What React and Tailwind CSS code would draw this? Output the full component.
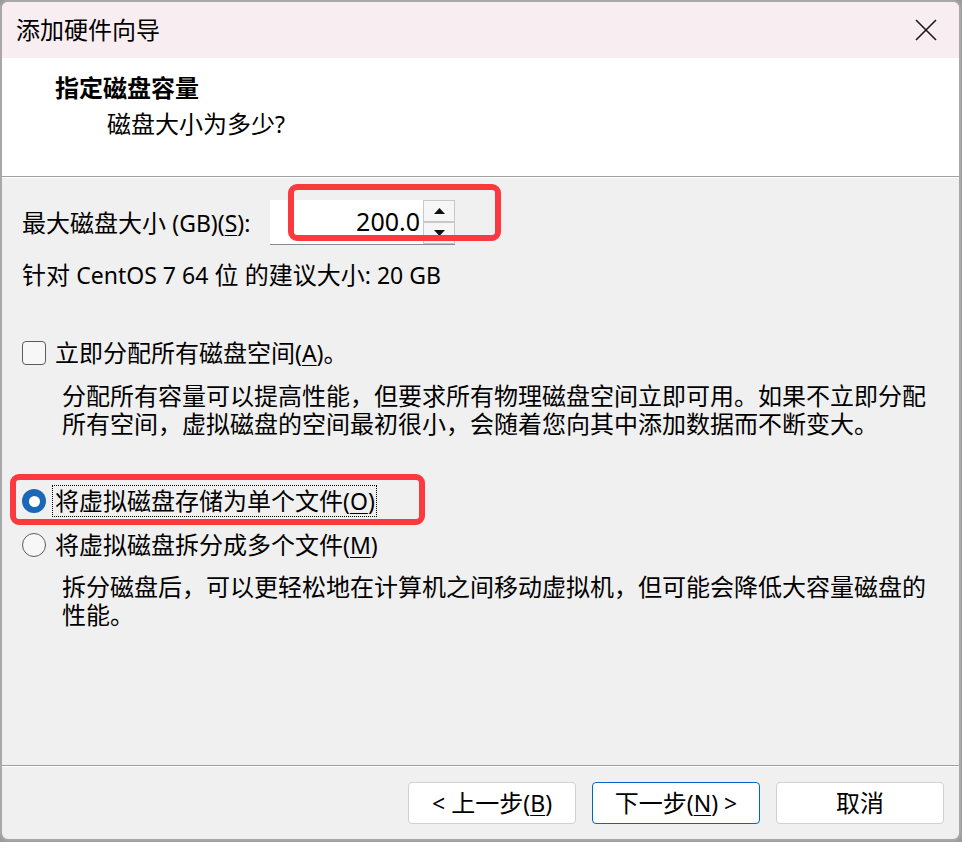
import React from 'react'

const L = ({ children }) => <span className="text-[23px]">{children}</span>
const U = ({ children }) => <span className="underline underline-offset-[3px] decoration-1">{children}</span>

function Radio({ checked }) {
  if (checked) {
    return (
      <span className="w-[24px] h-[24px] rounded-full bg-[#1a67b8] flex items-center justify-center shrink-0">
        <span className="w-[11px] h-[11px] rounded-full bg-white" />
      </span>
    )
  }
  return <span className="w-[24px] h-[24px] rounded-full border-[1.5px] border-[#5c5c5c] bg-[#f7f7f7] shrink-0" />
}

function Btn({ children, primary }) {
  return (
    <button
      className={
        primary
          ? 'w-[168px] h-[42px] rounded-[4px] border border-[#0067c0] bg-white text-[24px] leading-none flex items-center justify-center'
          : 'w-[168px] h-[42px] rounded-[4px] border border-[#d0d0d0] bg-white text-[24px] leading-none flex items-center justify-center'
      }
    >
      {children}
    </button>
  )
}

export default function App() {
  return (
    <div className="relative w-[962px] h-[842px] bg-[#9c9c9c] text-black font-['Noto_Sans','Noto_Sans_CJK_SC',sans-serif]">
      <div className="w-[961px] h-[841px] rounded-[8px] border-2 border-[#a8a8a8] bg-[#f0f0f0] flex flex-col overflow-hidden">
        {/* title bar */}
        <div className="h-[56px] bg-[#f8eef1] flex items-center justify-between pl-[14px] pr-[22px] shrink-0">
          <span className="text-[24px] leading-none">添加硬件向导</span>
          <svg width="22" height="22" viewBox="0 0 22 22">
            <path d="M1 1 L21 21 M21 1 L1 21" stroke="#1a1a1a" strokeWidth="1.6" fill="none" />
          </svg>
        </div>

        {/* header */}
        <div className="h-[119px] bg-white border-b border-[#a0a0a0] shrink-0 pt-[14px]">
          <div className="pl-[53px] text-[24px] leading-[32px] font-bold">指定磁盘容量</div>
          <div className="pl-[105px] mt-[4px] text-[24px] leading-[32px]">
            磁盘大小为多少<L>?</L>
          </div>
        </div>

        {/* body */}
        <div className="flex-1 border-t border-white pl-[20px] pt-[22px] text-[24px]">
          <div className="flex items-center">
            <div className="w-[248px] leading-[32px]">
              最大磁盘大小 <L>(GB)(<U>S</U>):</L>
            </div>
            <div className="flex h-[45px] w-[185px] bg-white border-b border-[#8a8a8a]">
              <div className="flex-1 flex items-center justify-end pr-[3px] text-[25px] font-['Noto_Sans',sans-serif]">200.0</div>
              <div className="w-[32px] flex flex-col">
                <div className="h-[22px] border border-[#c8c8c8] bg-[#f6f6f6] flex items-center justify-center">
                  <svg width="11" height="6" viewBox="0 0 11 6"><path d="M0 6 L5.5 0 L11 6 Z" fill="#111" /></svg>
                </div>
                <div className="h-[22px] border border-[#c8c8c8] bg-[#f6f6f6] flex items-center justify-center">
                  <svg width="11" height="6" viewBox="0 0 11 6"><path d="M0 0 L5.5 6 L11 0 Z" fill="#111" /></svg>
                </div>
              </div>
            </div>
          </div>

          <div className="mt-[14px] leading-[32px]">
            针对 <L>CentOS 7 64</L> 位 的建议大小<L>: 20 GB</L>
          </div>

          <div className="mt-[46px] flex items-center h-[32px]">
            <span className="w-[24px] h-[24px] rounded-[4px] border-[1.5px] border-[#5c5c5c] bg-[#f7f7f7] shrink-0" />
            <span className="ml-[9px] leading-[32px]">
              立即分配所有磁盘空间<L>(<U>A</U>)</L>。
            </span>
          </div>

          <div className="mt-[13px] pl-[40px] leading-[28px]">
            <div>分配所有容量可以提高性能，但要求所有物理磁盘空间立即可用。如果不立即分配</div>
            <div>所有空间，虚拟磁盘的空间最初很小，会随着您向其中添加数据而不断变大。</div>
          </div>

          <div className="mt-[47px] flex items-center h-[32px]">
            <Radio checked />
            <span className="ml-[6px] h-[32px] border border-dotted border-black pl-[2px] pr-[1px] leading-[30px]">
              将虚拟磁盘存储为单个文件<L>(<U>O</U>)</L>
            </span>
          </div>

          <div className="mt-[12px] flex items-center h-[32px]">
            <Radio />
            <span className="ml-[9px] leading-[32px]">
              将虚拟磁盘拆分成多个文件<L>(<U>M</U>)</L>
            </span>
          </div>

          <div className="mt-[12px] pl-[40px] leading-[28px]">
            <div>拆分磁盘后，可以更轻松地在计算机之间移动虚拟机，但可能会降低大容量磁盘的</div>
            <div>性能。</div>
          </div>
        </div>

        {/* footer */}
        <div className="h-[74px] shrink-0 border-t border-[#a0a0a0] flex flex-col">
          <div className="h-px bg-white" />
          <div className="flex justify-end gap-[16px] pr-[15px] pt-[15px]">
            <Btn>
              <L>&lt;</L>&nbsp;上一步<L>(<U>B</U>)</L>
            </Btn>
            <Btn primary>
              下一步<L>(<U>N</U>) &gt;</L>
            </Btn>
            <Btn>取消</Btn>
          </div>
        </div>
      </div>

      {/* red annotation boxes */}
      <div className="absolute left-[288px] top-[184px] w-[213px] h-[57px] border-[6px] border-[#fa3a3f] rounded-[9px]" />
      <div className="absolute left-[10px] top-[474px] w-[415px] h-[51px] border-[6px] border-[#fa3a3f] rounded-[9px]" />
    </div>
  )
}
